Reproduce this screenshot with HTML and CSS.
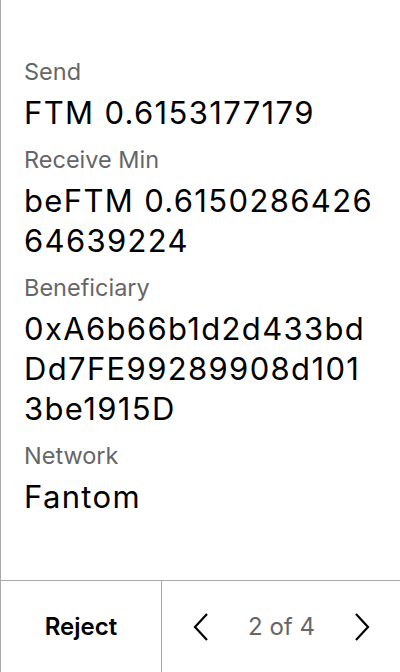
FILE: index.html
```html
<!DOCTYPE html>
<html>
<head>
<meta charset="utf-8">
<link rel="stylesheet" href="styles.css">
</head>
<body>
<div class="screen">
  <main class="content">
    <div class="field">
      <div class="label">Send</div>
      <div class="value">FTM 0.6153177179</div>
    </div>
    <div class="field">
      <div class="label">Receive Min</div>
      <div class="value">beFTM 0.6150286426<br>64639224</div>
    </div>
    <div class="field">
      <div class="label">Beneficiary</div>
      <div class="value">0xA6b66b1d2d433bd<br>Dd7FE99289908d101<br>3be1915D</div>
    </div>
    <div class="field">
      <div class="label">Network</div>
      <div class="value">Fantom</div>
    </div>
  </main>
  <footer class="bar">
    <div class="reject">Reject</div>
    <div class="pager">
      <svg class="chev" width="16" height="28" viewBox="0 0 16 28"><path d="M14 1 L2 14 L14 27" fill="none" stroke="#000" stroke-width="2.2"/></svg>
      <span class="count">2 of 4</span>
      <svg class="chev" width="16" height="28" viewBox="0 0 16 28"><path d="M2 1 L14 14 L2 27" fill="none" stroke="#000" stroke-width="2.2"/></svg>
    </div>
  </footer>
</div>
</body>
</html>
```
FILE: styles.css
```css
html, body {
  margin: 0;
  padding: 0;
  background: #fff;
}
.screen {
  width: 400px;
  height: 672px;
  box-sizing: border-box;
  border-left: 1px solid #a8a8a8;
  display: flex;
  flex-direction: column;
  font-family: Inter, "Noto Sans", sans-serif;
  color: #000;
}
.content {
  flex: 1;
  padding: 58px 0 0 23px;
  display: flex;
  flex-direction: column;
  gap: 13px;
}
.field {
  display: flex;
  flex-direction: column;
  gap: 7px;
}
.label {
  font-size: 23.5px;
  line-height: 28px;
  color: #666;
}
.value {
  font-size: 31px;
  line-height: 40px;
  letter-spacing: 1.35px;
  color: #000;
}
.bar {
  height: 92px;
  border-top: 1px solid #a8a8a8;
  box-sizing: border-box;
  display: flex;
}
.reject {
  width: 160px;
  border-right: 1px solid #a8a8a8;
  display: flex;
  align-items: center;
  justify-content: center;
  font-size: 24px;
  font-weight: 600;
}
.pager {
  flex: 1;
  display: flex;
  align-items: center;
  justify-content: space-between;
  padding: 0 30px 0 31px;
}
.count {
  font-size: 24px;
  color: #666;
}
.chev {
  display: block;
}
```
